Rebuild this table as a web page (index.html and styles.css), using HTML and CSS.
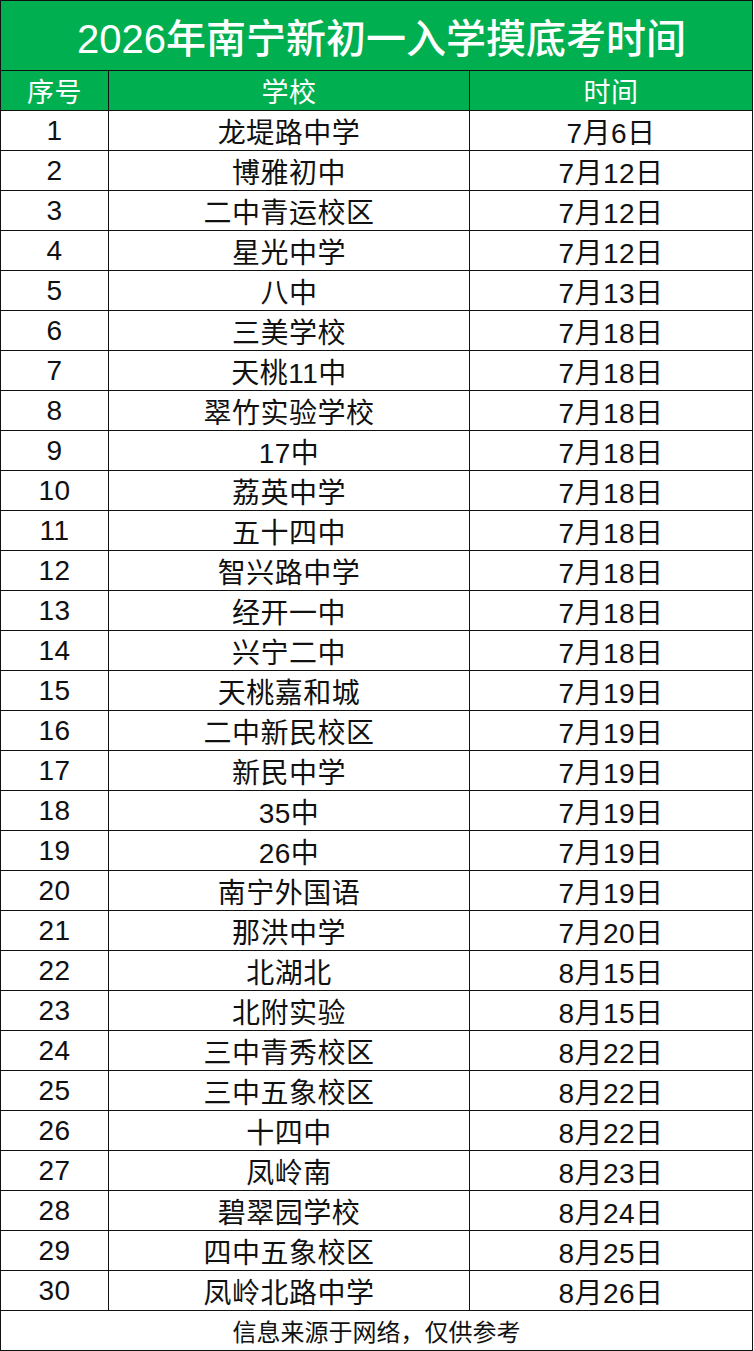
FILE: index.html
```html
<!DOCTYPE html>
<html lang="zh-CN">
<head>
<meta charset="utf-8">
<title>2026年南宁新初一入学摸底考时间</title>
<link rel="stylesheet" href="styles.css">
</head>
<body>
<div class="sheet">
  <div class="title">2026年南宁新初一入学摸底考时间</div>
  <div class="row head"><div class="c1">序号</div><div class="c2">学校</div><div class="c3">时间</div></div>
  <div class="row"><div class="c1">1</div><div class="c2">龙堤路中学</div><div class="c3">7月6日</div></div>
  <div class="row"><div class="c1">2</div><div class="c2">博雅初中</div><div class="c3">7月12日</div></div>
  <div class="row"><div class="c1">3</div><div class="c2">二中青运校区</div><div class="c3">7月12日</div></div>
  <div class="row"><div class="c1">4</div><div class="c2">星光中学</div><div class="c3">7月12日</div></div>
  <div class="row"><div class="c1">5</div><div class="c2">八中</div><div class="c3">7月13日</div></div>
  <div class="row"><div class="c1">6</div><div class="c2">三美学校</div><div class="c3">7月18日</div></div>
  <div class="row"><div class="c1">7</div><div class="c2">天桃11中</div><div class="c3">7月18日</div></div>
  <div class="row"><div class="c1">8</div><div class="c2">翠竹实验学校</div><div class="c3">7月18日</div></div>
  <div class="row"><div class="c1">9</div><div class="c2">17中</div><div class="c3">7月18日</div></div>
  <div class="row"><div class="c1">10</div><div class="c2">荔英中学</div><div class="c3">7月18日</div></div>
  <div class="row"><div class="c1">11</div><div class="c2">五十四中</div><div class="c3">7月18日</div></div>
  <div class="row"><div class="c1">12</div><div class="c2">智兴路中学</div><div class="c3">7月18日</div></div>
  <div class="row"><div class="c1">13</div><div class="c2">经开一中</div><div class="c3">7月18日</div></div>
  <div class="row"><div class="c1">14</div><div class="c2">兴宁二中</div><div class="c3">7月18日</div></div>
  <div class="row"><div class="c1">15</div><div class="c2">天桃嘉和城</div><div class="c3">7月19日</div></div>
  <div class="row"><div class="c1">16</div><div class="c2">二中新民校区</div><div class="c3">7月19日</div></div>
  <div class="row"><div class="c1">17</div><div class="c2">新民中学</div><div class="c3">7月19日</div></div>
  <div class="row"><div class="c1">18</div><div class="c2">35中</div><div class="c3">7月19日</div></div>
  <div class="row"><div class="c1">19</div><div class="c2">26中</div><div class="c3">7月19日</div></div>
  <div class="row"><div class="c1">20</div><div class="c2">南宁外国语</div><div class="c3">7月19日</div></div>
  <div class="row"><div class="c1">21</div><div class="c2">那洪中学</div><div class="c3">7月20日</div></div>
  <div class="row"><div class="c1">22</div><div class="c2">北湖北</div><div class="c3">8月15日</div></div>
  <div class="row"><div class="c1">23</div><div class="c2">北附实验</div><div class="c3">8月15日</div></div>
  <div class="row"><div class="c1">24</div><div class="c2">三中青秀校区</div><div class="c3">8月22日</div></div>
  <div class="row"><div class="c1">25</div><div class="c2">三中五象校区</div><div class="c3">8月22日</div></div>
  <div class="row"><div class="c1">26</div><div class="c2">十四中</div><div class="c3">8月22日</div></div>
  <div class="row"><div class="c1">27</div><div class="c2">凤岭南</div><div class="c3">8月23日</div></div>
  <div class="row"><div class="c1">28</div><div class="c2">碧翠园学校</div><div class="c3">8月24日</div></div>
  <div class="row"><div class="c1">29</div><div class="c2">四中五象校区</div><div class="c3">8月25日</div></div>
  <div class="row"><div class="c1">30</div><div class="c2">凤岭北路中学</div><div class="c3">8月26日</div></div>
  <div class="foot">信息来源于网络，仅供参考</div>
</div>
</body>
</html>
```

FILE: styles.css
```css
* { box-sizing: border-box; }
html, body { margin: 0; padding: 0; background: #ffffff; }
body {
  font-family: "Liberation Sans", "Noto Sans CJK SC", sans-serif;
  color: #111111;
}
.sheet {
  width: 753px;
  border-left: 1px solid #111;
  border-right: 1px solid #111;
  border-bottom: 1px solid #111;
}
.title {
  height: 70px;
  border-top: 1px solid #111;
  background: #00b050;
  color: #ffffff;
  font-size: 40px;
  font-weight: 500;
  display: flex;
  align-items: center;
  justify-content: center;
  padding-left: 10px;
}
.row {
  display: grid;
  grid-template-columns: 108px 361px 1fr;
  height: 40px;
  border-top: 1px solid #111;
  font-size: 28px;
  letter-spacing: 0.5px;
}
.row > div {
  display: flex;
  align-items: center;
  justify-content: center;
}
.c1, .c2 { border-right: 1px solid #111; }
.head { background: #00b050; color: #ffffff; font-size: 27px; }
.foot {
  height: 40px;
  border-top: 1px solid #111;
  font-size: 24px;
  display: flex;
  align-items: center;
  justify-content: center;
}
```
